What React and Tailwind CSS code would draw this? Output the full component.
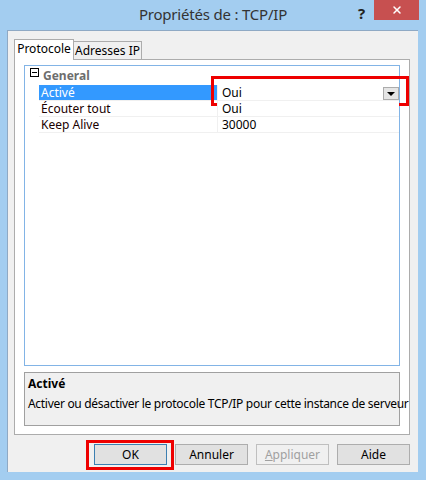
import { X } from "lucide-react";

const rows = [
  { name: "Activé", value: "Oui", selected: true },
  { name: "Écouter tout", value: "Oui" },
  { name: "Keep Alive", value: "30000" },
];

function PropRow({ row }) {
  return (
    <div className="relative flex h-[16px] border-b border-[#f0f0f0]">
      <div
        className={
          row.selected
            ? "flex w-[178px] items-center bg-[#3399ff] pl-[2px] text-white"
            : "flex w-[178px] items-center pl-[2px] text-[#1a0000]"
        }
      >
        {row.name}
      </div>
      <div className="flex flex-1 items-center border-l border-[#f0f0f0] bg-white pl-[4px]">{row.value}</div>
      {row.selected && (
        <>
          <div className="absolute right-[0px] top-[2px] flex h-[13px] w-[16px] items-center justify-center border border-[#acacac] bg-[#e5e5e5]">
            <span className="h-0 w-0 border-x-[4px] border-t-[4px] border-x-transparent border-t-black" />
          </div>
          <div className="absolute -top-[9px] left-[172px] -right-[10px] h-[30px] border-[3px] border-[#ee0000]" />
        </>
      )}
    </div>
  );
}

function Btn({ children, primary, disabled }) {
  return (
    <div
      className={
        "flex h-[21px] w-[73px] items-center justify-center border " +
        (primary
          ? "border-[#3c7fb1] bg-[#e1e1e1] text-black"
          : disabled
          ? "border-[#bfbfbf] bg-[#f0f0f0] text-[#a0a0a0]"
          : "border-[#adadad] bg-[#e1e1e1] text-black")
      }
    >
      {children}
    </div>
  );
}

export default function App() {
  return (
    <div
      className="flex h-[480px] w-[426px] flex-col bg-[#a3cdf0] text-[12px]"
      style={{ fontFamily: '"Noto Sans", "Open Sans", sans-serif' }}
    >
      <div className="relative flex h-[30px] items-center justify-center">
        <span className="pb-[2px] text-[15px] tracking-[-0.2px] text-[#333]">Propriétés de : TCP/IP</span>
        <span className="absolute left-[358px] top-[2px] text-[15px] font-bold text-[#222]">?</span>
        <div className="absolute left-[374px] top-0 flex h-[20px] w-[45px] items-center justify-center bg-[#c75050]">
          <X className="size-[12px] text-white" strokeWidth={3} />
        </div>
      </div>
      <div className="mb-[8px] ml-[7px] mr-[8px] flex flex-1 flex-col border-l border-t border-[#8fa9c4] bg-[#f0f0f0] px-[6px] pt-[8px]">
        <div className="flex items-end">
          <div className="relative z-10 -mb-px flex h-[21px] w-[60px] items-center justify-center border border-b-0 border-[#acacac] bg-white pb-[2px] text-black">
            Protocole
          </div>
          <div className="flex h-[18px] w-[68px] items-center justify-center border border-l-0 border-b-0 border-[#acacac] bg-[#f0f0f0] text-black">
            Adresses IP
          </div>
        </div>
        <div className="flex h-[376px] w-[396px] flex-col border border-[#acacac] bg-white px-[9px] pb-[8px] pt-[5px]">
          <div className="flex h-[302px] flex-col border border-[#82b4e6] bg-white">
            <div className="flex h-[19px]">
              <div className="flex w-[14px] items-start justify-end pt-[2px]">
                <div className="flex h-[9px] w-[9px] items-center justify-center border border-black bg-white">
                  <span className="h-px w-[5px] bg-black" />
                </div>
              </div>
              <div className="flex items-center pl-[4px] font-bold text-[#6d6d6d]">General</div>
            </div>
            <div className="ml-[14px] flex flex-col">
              {rows.map((r) => (
                <PropRow key={r.name} row={r} />
              ))}
            </div>
          </div>
          <div className="mt-[6px] flex h-[54px] flex-col border border-[#a0a0a0] bg-[#f0f0f0] px-[3px] pt-[2px] text-black">
            <span className="font-bold">Activé</span>
            <span className="mt-[2px] whitespace-nowrap tracking-[-0.3px]">
              Activer ou désactiver le protocole TCP/IP pour cette instance de serveur
            </span>
          </div>
        </div>
        <div className="flex justify-end gap-[8px] pt-[9px] pr-[2px]">
          <div className="relative">
            <Btn primary>OK</Btn>
            <div className="absolute -bottom-[5px] -left-[8px] -right-[7px] -top-[4px] border-[3px] border-[#ee0000]" />
          </div>
          <Btn>Annuler</Btn>
          <Btn disabled>
            <span className="underline">A</span>ppliquer
          </Btn>
          <Btn>Aide</Btn>
        </div>
      </div>
    </div>
  );
}
